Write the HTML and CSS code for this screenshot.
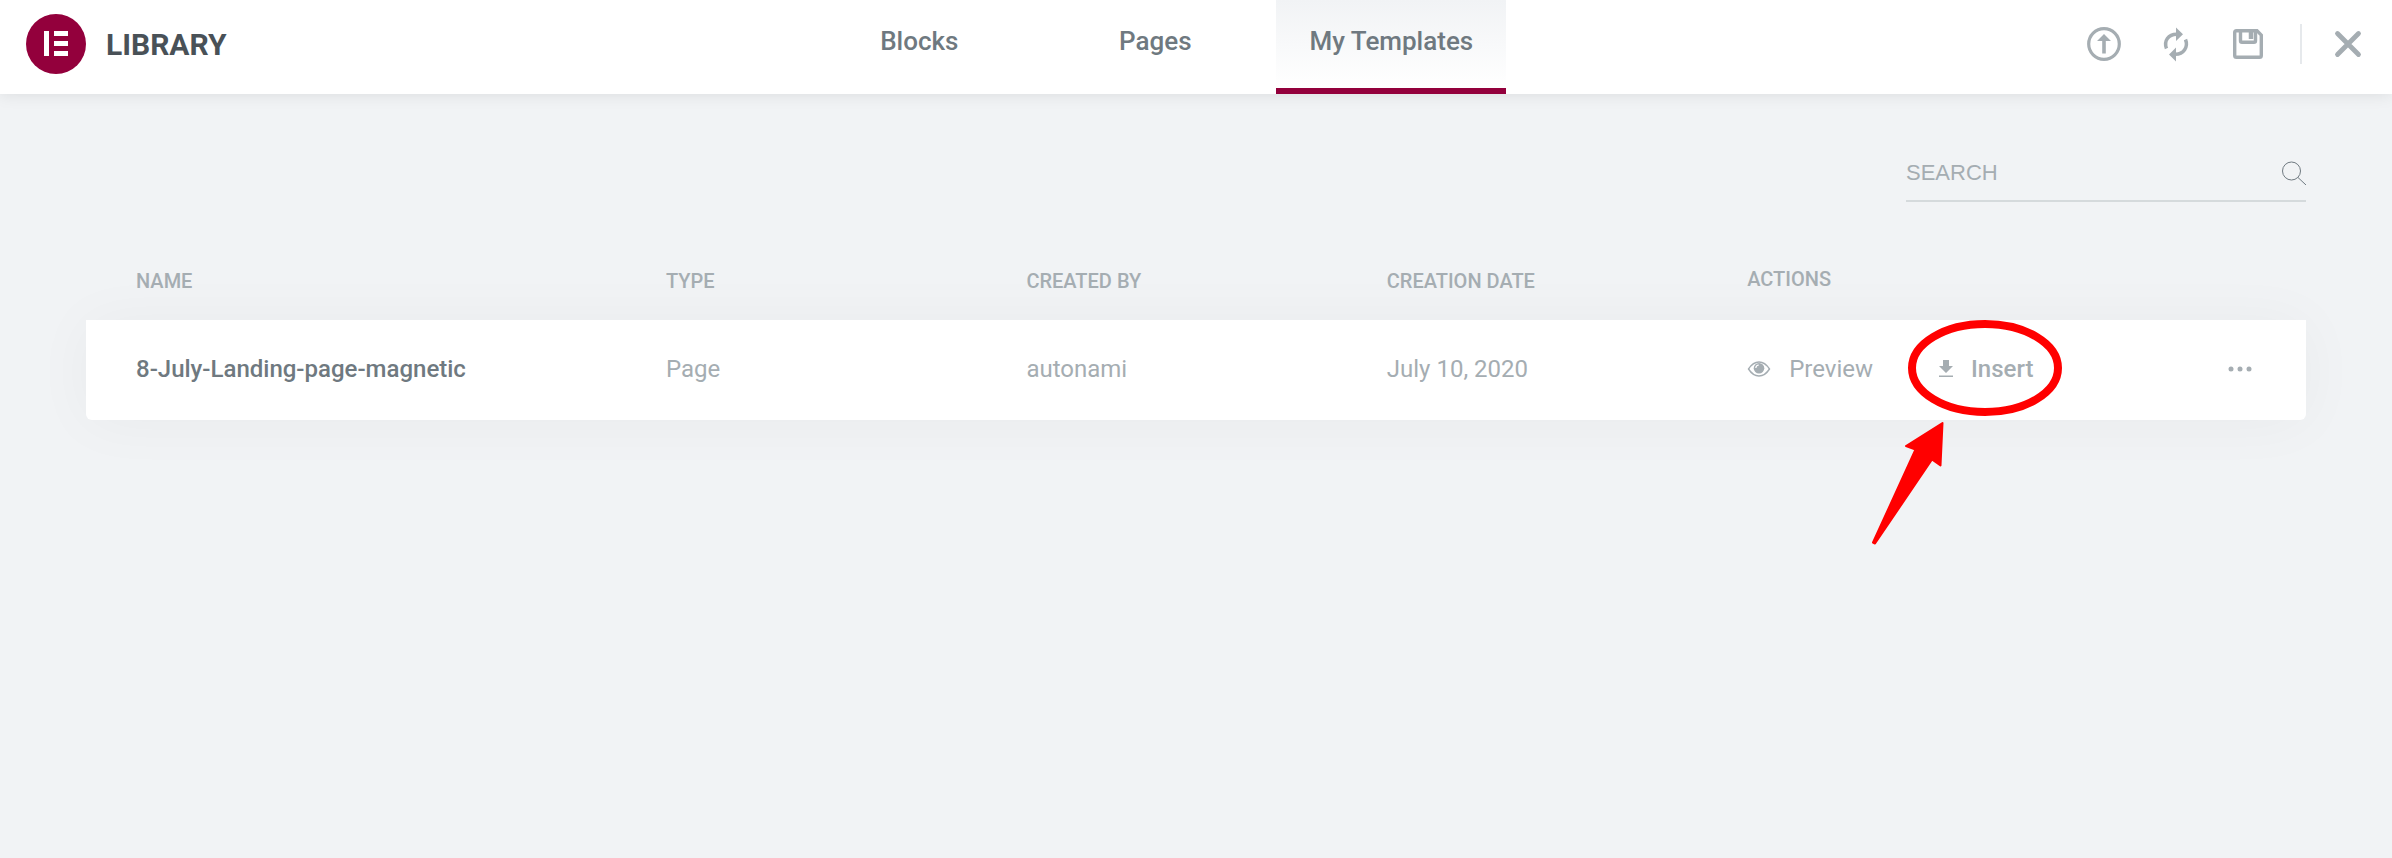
FILE: index.html
```html
<!DOCTYPE html>
<html lang="en">
<head>
<meta charset="utf-8">
<title>Library</title>
<link rel="stylesheet" href="styles.css">
</head>
<body>
<header class="header">
  <div class="brand">
    <svg class="brand-logo" viewBox="0 0 60 60" aria-hidden="true">
      <circle cx="30" cy="30" r="30" fill="#93003c"/>
      <path fill="#fff" d="M18 17h5v25h-5zM28 17h14v5H28zM28 27h14v5H28zM28 37h14v5H28z"/>
    </svg>
    <h1 class="brand-title">LIBRARY</h1>
  </div>
  <nav class="tabs">
    <button class="tab" type="button">Blocks</button>
    <button class="tab" type="button">Pages</button>
    <button class="tab tab-active" type="button">My Templates</button>
  </nav>
  <div class="tools">
    <button class="icon-button" type="button" aria-label="Import template">
      <svg viewBox="0 0 40 40"><circle cx="20" cy="20" r="15.300" fill="none" stroke="currentColor" stroke-width="3.200"/><path fill="currentColor" d="M20 10l7 7h-5.200v12.500h-3.600V17H13z"/></svg>
    </button>
    <button class="icon-button" type="button" aria-label="Sync library">
      <svg viewBox="0 0 40 40"><g fill="none" stroke="currentColor" stroke-width="3.500"><path d="M10.500 24.500C7.500 17 12.500 10.200 20.500 10.200"/><path d="M29.500 15.500C32.500 23 27.500 30.300 19.500 30.300"/></g><path fill="currentColor" d="M20 3.500l7 6.700-7 6.700zM20 23.600v14L13 30.500z"/></svg>
    </button>
    <button class="icon-button" type="button" aria-label="Save">
      <svg viewBox="0 0 40 40" fill="none" stroke="currentColor" stroke-width="3.400"><path d="M8.500 6.700h20.500l4.300 4.500V31.500q0 1.800-1.800 1.800H8.500q-1.800 0-1.800-1.800V8.500Q6.700 6.700 8.500 6.700z"/><path d="M12.500 6.700v10q0 1.500 1.500 1.500h12q1.500 0 1.500-1.500V6.700"/><path d="M23 7v8" stroke-width="4.500"/></svg>
    </button>
    <button class="icon-button close-button" type="button" aria-label="Close">
      <svg viewBox="0 0 40 40"><path d="M9.500 9.500l21 21M30.500 9.500l-21 21" fill="none" stroke="currentColor" stroke-width="4.800" stroke-linecap="round"/></svg>
    </button>
  </div>
</header>
<main class="content">
  <div class="search">
    <input class="search-input" type="search" placeholder="SEARCH" aria-label="Search">
    <svg class="search-icon" viewBox="0 0 24 24" aria-hidden="true"><g fill="none" stroke="currentColor"><circle cx="9.500" cy="10" r="9"/><path d="M16 16.500l8 7.500"/></g></svg>
  </div>
  <table class="templates">
    <thead>
      <tr class="row head-row">
        <th scope="col">NAME</th>
        <th scope="col">TYPE</th>
        <th scope="col">CREATED BY</th>
        <th scope="col">CREATION DATE</th>
        <th class="head-actions" scope="col">ACTIONS</th>
      </tr>
    </thead>
    <tbody>
      <tr class="row card-row">
        <td class="name">8-July-Landing-page-magnetic</td>
        <td>Page</td>
        <td>autonami</td>
        <td>July 10, 2020</td>
        <td class="actions">
          <button class="action" type="button">
            <svg class="eye-icon" viewBox="0 0 24 16" aria-hidden="true"><path d="M1.500 8Q6 1 12 1T22.500 8Q18 15 12 15T1.500 8z" fill="none" stroke="currentColor" stroke-width="1.400"/><circle cx="12" cy="7.200" r="5.300" fill="currentColor"/><path d="M8.800 7Q9 4.200 11.800 4" fill="none" stroke="#fff" stroke-width="1.200"/></svg>
            Preview
          </button>
          <div class="insert">
            <button class="action action-strong" type="button">
              <svg class="download-icon" viewBox="0 0 14 18" aria-hidden="true"><path fill="currentColor" d="M4 0h6v6h4l-7 7-7-7h4zM0 15.500h14V17H0z"/></svg>
              Insert
            </button>
            <svg class="annotation" viewBox="0 0 200 240" aria-hidden="true">
              <ellipse cx="122" cy="58" rx="73" ry="44" fill="none" stroke="#f00" stroke-width="8"/>
              <path d="M79.500 113L43 136 52.500 139.500 10 232.500 12 233.500 69 149.500 77.500 155.500z" fill="#f00" stroke="#f00" stroke-width="2" stroke-linejoin="round"/>
            </svg>
          </div>
          <button class="action more" type="button" aria-label="More actions">
            <svg class="dots-icon" viewBox="0 0 24 6"><g fill="currentColor"><circle cx="3" cy="3" r="2.500"/><circle cx="12" cy="3" r="2.500"/><circle cx="21" cy="3" r="2.500"/></g></svg>
          </button>
        </td>
      </tr>
    </tbody>
  </table>
</main>
</body>
</html>
```
FILE: styles.css
```css
* {
  box-sizing: border-box;
}

body {
  margin: 0;
  min-height: 100vh;
  background: #f1f3f5;
  color: #a5adb2;
  font-family: Roboto, sans-serif;
  font-size: 24px;
  line-height: 32px;
}

button {
  padding: 0;
  border: 0;
  background: none;
  color: inherit;
  font: inherit;
  cursor: pointer;
}

svg {
  display: block;
}

.header {
  position: relative;
  display: flex;
  justify-content: space-between;
  height: 94px;
  padding: 0 24px 0 26px;
  background: #fff;
  box-shadow: 0 0 16px rgba(0, 0, 0, 0.1);
}

.brand {
  display: flex;
  align-items: center;
  gap: 20px;
  padding-bottom: 6px;
}

.brand-logo {
  width: 60px;
  height: 60px;
}

.brand-title {
  margin: 0;
  padding-top: 2px;
  color: #495157;
  font-size: 30px;
  font-weight: 700;
}

.tabs {
  display: grid;
  grid-template-columns: repeat(3, 230px);
  gap: 6px;
}

.tab {
  padding-bottom: 6px;
  border-bottom: 6px solid transparent;
  color: #6f7980;
  font-size: 26px;
  font-weight: 500;
}

.tab-active {
  border-bottom-color: #93003c;
  background: linear-gradient(#f1f3f5, #fff) padding-box;
}

.tools {
  display: flex;
  align-items: center;
  gap: 32px;
  padding-bottom: 6px;
}

.icon-button svg {
  width: 40px;
  height: 40px;
}

.close-button {
  padding-left: 26px;
  border-left: 2px solid #e6e9ec;
}

.content {
  padding: 54px 86px;
}

.search {
  display: flex;
  align-items: center;
  width: 400px;
  height: 54px;
  margin-left: auto;
  padding-bottom: 2px;
  border-bottom: 2px solid #d5dadc;
}

.search-input {
  flex: 1;
  min-width: 0;
  padding: 0;
  border: 0;
  outline: 0;
  background: none;
  color: #6f7980;
  font-family: "Liberation Sans", Arial, sans-serif;
  font-size: 22px;
}

.search-input::placeholder {
  color: #a5adb2;
}

.search-icon {
  width: 24px;
  height: 24px;
  color: #6f7980;
}

.templates,
.templates thead,
.templates tbody {
  display: block;
}

.row {
  display: grid;
  grid-template-columns: 25% 17% 17% 17% 1fr;
  align-items: center;
  padding: 0 50px;
}

.row th,
.row td {
  padding: 0;
  text-align: left;
}

.head-row {
  height: 118px;
  padding-top: 40px;
  font-size: 20px;
}

.row th {
  font-weight: 500;
}

.row .head-actions {
  padding-bottom: 4px;
}

.card-row {
  height: 100px;
  padding-bottom: 2px;
  border-radius: 0 0 6px 6px;
  background: #fff;
  box-shadow: 0 2px 60px rgba(0, 0, 0, 0.04);
}

.name {
  color: #6f7980;
  font-weight: 500;
}

.row .actions {
  display: flex;
  align-items: center;
}

.action {
  display: flex;
  align-items: center;
  gap: 18px;
  height: 32px;
}

.action-strong {
  font-weight: 500;
}

.eye-icon {
  width: 24px;
  height: 16px;
}

.download-icon {
  width: 14px;
  height: 18px;
}

.insert {
  position: relative;
  margin-left: 66px;
}

.annotation {
  position: absolute;
  top: -43px;
  left: -76px;
  width: 200px;
  height: 240px;
  pointer-events: none;
}

.more {
  margin-left: auto;
  padding-right: 4px;
}

.dots-icon {
  width: 24px;
  height: 6px;
}
```
